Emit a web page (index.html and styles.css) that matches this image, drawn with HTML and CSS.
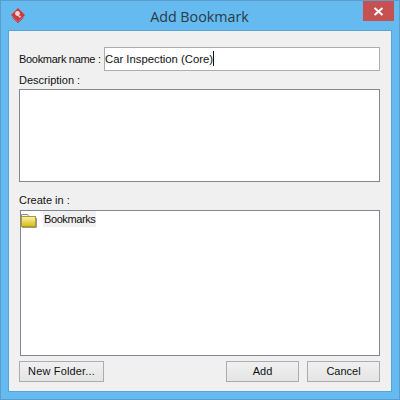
FILE: index.html
```html
<!DOCTYPE html>
<html lang="en">
<head>
  <meta charset="UTF-8" />
  <title>Add Bookmark</title>
  <link rel="stylesheet" href="styles.css">
</head>
<body>
  <div class="window">
    <div class="titlebar">
      <svg class="app-icon" width="16" height="16" viewBox="0 0 16 16">
        <path d="M8 1 L15 8 L8 15 L1 8 Z" fill="#d0393f" />
        <path d="M2.5 10.5 L8 16 L13.5 10.5" fill="none" stroke="#c9454a" stroke-width="1" />
        <circle cx="7.5" cy="6.5" r="2.4" fill="#f3d5d5" />
        <path d="M7 8 L10 11 L11 9 Z" fill="#f3d5d5" />
      </svg>
      <span class="title">Add Bookmark</span>
      <button class="close" aria-label="Close">
        <svg width="11" height="9" viewBox="0 0 11 9">
          <path d="M1.5 1 L9.5 8 M9.5 1 L1.5 8" stroke="#fff" stroke-width="2" />
        </svg>
      </button>
    </div>
    <div class="content">
      <div class="name-row">
        <label for="name">Bookmark name :</label>
        <div class="name-input" id="name">Car Inspection (Core)<span class="caret"></span></div>
      </div>
      <label class="desc-label">Description :</label>
      <div class="desc-box"></div>
      <label class="create-label">Create in :</label>
      <div class="tree">
        <div class="tree-row">
          <svg class="folder" width="17" height="15" viewBox="0 0 17 15">
            <defs>
              <linearGradient id="folderFill" x1="0" y1="0" x2="0" y2="1">
                <stop offset="0" stop-color="#f8f2bc" />
                <stop offset="1" stop-color="#d8bc00" />
              </linearGradient>
            </defs>
            <path d="M0.5 4 V1.5 H6.5 L7.5 3" fill="none" stroke="#8d8d86" />
            <rect x="0.5" y="3.5" width="14" height="10" fill="url(#folderFill)" stroke="#aa9a2c" />
            <path d="M1 14.5 H15.5 V5" fill="none" stroke="#9a9a90" />
          </svg>
          <span class="tree-label">Bookmarks</span>
        </div>
      </div>
      <div class="buttons">
        <button class="btn btn-folder">New Folder...</button>
        <div class="right-buttons">
          <button class="btn">Add</button>
          <button class="btn">Cancel</button>
        </div>
      </div>
    </div>
  </div>
</body>
</html>
```

FILE: styles.css
```css
html, body {
  margin: 0;
  padding: 0;
}

body {
  width: 400px;
  height: 400px;
  font-family: "Liberation Sans", sans-serif;
  font-size: 11px;
  color: #111;
}

.window {
  width: 400px;
  height: 400px;
  box-sizing: border-box;
  display: flex;
  flex-direction: column;
  background-color: #65bbf0;
  border: 1px solid #5a9fcc;
  padding: 0 7px 7px 7px;
}

.titlebar {
  height: 29px;
  flex: none;
  display: flex;
  align-items: center;
  justify-content: center;
  position: relative;
}

.app-icon {
  position: absolute;
  left: 2px;
  top: 6px;
}

.title {
  font-family: "Open Sans", sans-serif;
  font-size: 14.3px;
  color: #2b3a45;
  margin-top: 2px;
  margin-left: -1px;
}

.close {
  position: absolute;
  right: -2px;
  top: 0;
  width: 31px;
  height: 20px;
  padding: 0;
  border: none;
  background-color: #c75050;
  display: flex;
  align-items: center;
  justify-content: center;
}

.content {
  flex: 1;
  background-color: #f0f0f0;
  border: 1px solid #57a5d6;
  padding: 16px 11px 9px 10px;
  display: flex;
  flex-direction: column;
}

.name-row {
  display: flex;
  align-items: center;
  height: 24px;
  white-space: nowrap;
}

.name-row label {
  width: 85px;
  flex: none;
  letter-spacing: -0.3px;
}

.name-input {
  flex: 1;
  height: 24px;
  box-sizing: border-box;
  border: 1px solid #abadb3;
  background-color: #fff;
  font-size: 11.3px;
  line-height: 22px;
}

.caret {
  display: inline-block;
  width: 1px;
  height: 15px;
  background-color: #111;
  vertical-align: -3px;
}

.desc-label {
  display: block;
  height: 18px;
  line-height: 18px;
}

.desc-box {
  height: 93px;
  box-sizing: border-box;
  border: 1px solid #828790;
  background-color: #fff;
}

.create-label {
  display: block;
  margin-top: 10px;
  height: 18px;
  line-height: 16px;
}

.tree {
  height: 146px;
  box-sizing: border-box;
  margin-left: 1px;
  border: 1px solid #828790;
  background-color: #fff;
}

.tree-row {
  display: flex;
  height: 16px;
}

.folder {
  margin-top: 2px;
  flex: none;
}

.tree-label {
  margin-left: 5px;
  width: 53px;
  padding-left: 1px;
  box-sizing: border-box;
  background-color: #f0f0f0;
  line-height: 16px;
  letter-spacing: -0.4px;
}

.buttons {
  display: flex;
  justify-content: space-between;
  margin-top: 5px;
}

.right-buttons {
  display: flex;
  gap: 8px;
}

.btn {
  width: 73px;
  height: 21px;
  padding: 0 0 2px;
  border: 1px solid #acacac;
  background: linear-gradient(#f0f0f0, #e5e5e5);
  font-family: "Liberation Sans", sans-serif;
  font-size: 11px;
  color: #111;
}

.btn-folder {
  width: 85px;
  letter-spacing: 0.15px;
}
```
